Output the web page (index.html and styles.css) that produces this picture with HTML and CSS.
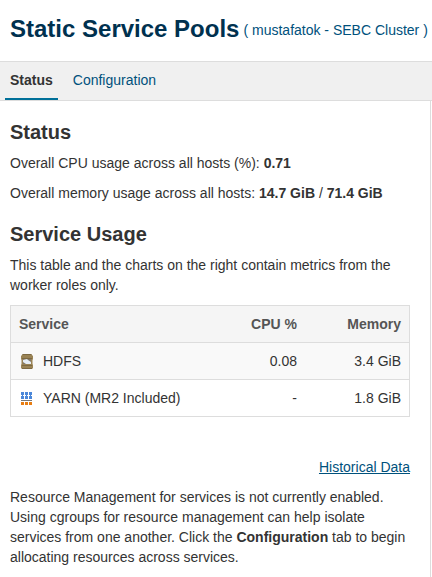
FILE: index.html
```html
<!DOCTYPE html>
<html lang="en">
<head>
<meta charset="utf-8">
<title>Static Service Pools</title>
<link rel="stylesheet" href="styles.css">
</head>
<body>
<header class="page-header">
  <h1>Static Service Pools</h1>
  <span class="cluster">( mustafatok - SEBC Cluster )</span>
</header>
<nav class="tabs">
  <a class="tab active">Status</a>
  <a class="tab">Configuration</a>
</nav>
<main class="content">
  <h2>Status</h2>
  <p class="metric">Overall CPU usage across all hosts (%): <b>0.71</b></p>
  <p class="metric">Overall memory usage across all hosts: <b>14.7 GiB</b> / <b>71.4 GiB</b></p>
  <h2 class="usage-title">Service Usage</h2>
  <p>This table and the charts on the right contain metrics from the worker roles only.</p>
  <table class="usage">
    <thead>
      <tr><th class="name">Service</th><th class="cpu">CPU %</th><th class="memory">Memory</th></tr>
    </thead>
    <tbody>
      <tr class="striped">
        <td><span class="service"><svg class="icon" width="16" height="16" viewBox="0 0 16 16">
          <path d="M4 1h8l2 2v3l-.5 1v4l.5 1v3l-1 1H3l-1-1v-3l.5-1V7L2 6V3z" fill="#9a8355"/>
          <path d="M4 1h8l1 1H3zM3 5h10v1H3zM3 12h10v1H3zM3 15h10v1H3z" fill="#7d6942"/>
          <path d="M4 6h8v5H4z" fill="#82796a"/>
          <path d="M4 7l4-1 1 1 3 2v2H7L4 9z" fill="#e6edf5"/>
        </svg>HDFS</span></td><td class="cpu">0.08</td><td>3.4 GiB</td>
      </tr>
      <tr>
        <td><span class="service"><svg class="icon" width="16" height="16" viewBox="0 0 16 16" shape-rendering="crispEdges">
          <path d="M2 2h3v3H2zM6 2h3v3H6zM10 2h3v3h-3zM2 6h3v3H2zM6 6h3v3H6zM10 6h3v3h-3zM3 5h1v1H3zM7 5h1v1H7zM11 5h1v1h-1z" fill="#4b87d9"/>
          <path d="M2 10h11v1H2z" fill="#777"/>
          <path d="M2 12h3v3H2zM6 12h3v3H6zM10 12h3v3h-3z" fill="#e87d12"/>
        </svg>YARN (MR2 Included)</span></td><td class="cpu">-</td><td>1.8 GiB</td>
      </tr>
    </tbody>
  </table>
  <div class="history"><a>Historical Data</a></div>
  <p>Resource Management for services is not currently enabled. Using cgroups for resource management can help isolate services from one another. Click the <b>Configuration</b> tab to begin allocating resources across services.</p>
</main>
</body>
</html>
```
FILE: styles.css
```css
* { box-sizing: border-box; }
body {
  margin: 0;
  height: 577px;
  overflow: hidden;
  display: flex;
  flex-direction: column;
  background: #fff;
  color: #333;
  font: 14px/20px "Liberation Sans", Arial, sans-serif;
}
.page-header {
  display: flex;
  align-items: flex-start;
  gap: 4px;
  height: 61px;
  padding: 9px 0 0 10px;
  white-space: nowrap;
}
h1 { margin: 0; font-size: 24px; line-height: 40px; color: #00314f; }
.cluster { margin-top: 11px; color: #00517c; }
.tabs {
  display: flex;
  height: 40px;
  padding: 0 5px;
  gap: 5px;
  background: #f0f0f0;
  border-top: 1px solid #ddd;
  border-bottom: 1px solid #ddd;
}
.tab { height: 38px; padding: 8px 5px; color: #00517c; }
.tab + .tab { padding-left: 10px; }
.active { color: #333; font-weight: bold; border-bottom: 2px solid #007099; }
.content {
  flex: 1;
  width: 431px;
  padding: 21px 20px 0 10px;
  border-right: 1px solid #ddd;
}
h2 { margin: 0 0 11px; font-size: 20px; line-height: 20px; }
p { margin: 0 0 10px; }
.usage-title { margin-top: 21px; }
.usage {
  width: 400px;
  table-layout: fixed;
  border: 1px solid #ddd;
  border-collapse: collapse;
}
th, td { height: 37px; padding: 8px; border-top: 1px solid #ddd; text-align: right; }
th { background: #f5f5f5; color: #555; }
th:first-child, td:first-child { text-align: left; }
.name { width: 196px; }
.cpu { width: 99px; padding-right: 8.5px; }
.striped { background: #f9f9f9; }
.service { display: flex; align-items: center; gap: 8px; }
.history { margin: 40px 0 10px; text-align: right; color: #00517c; text-decoration: underline; }
```
